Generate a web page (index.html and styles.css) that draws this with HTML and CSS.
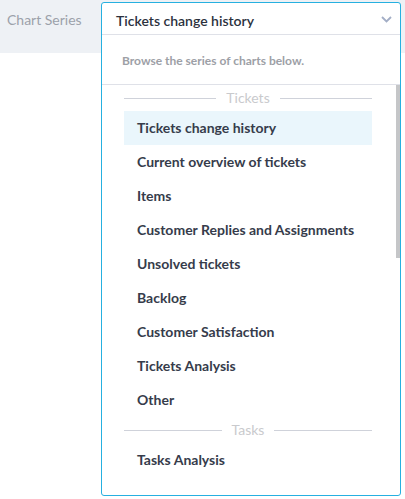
FILE: index.html
```html
<!DOCTYPE html>
<html>
<head>
<meta charset="utf-8">
<link rel="stylesheet" href="styles.css">
</head>
<body>
<div class="bar">
  <span class="label">Chart Series</span>
</div>
<div class="dropdown">
  <div class="head">
    <span class="value">Tickets change history</span>
    <svg class="chev" width="11" height="7" viewBox="0 0 11 7"><path d="M1 1 L5.5 5.5 L10 1" fill="none" stroke="#a3aec6" stroke-width="1.8"/></svg>
  </div>
  <div class="desc">Browse the series of charts below.</div>
  <div class="list">
    <div class="group"><span>Tickets</span></div>
    <div class="item active">Tickets change history</div>
    <div class="item">Current overview of tickets</div>
    <div class="item">Items</div>
    <div class="item">Customer Replies and Assignments</div>
    <div class="item">Unsolved tickets</div>
    <div class="item">Backlog</div>
    <div class="item">Customer Satisfaction</div>
    <div class="item">Tickets Analysis</div>
    <div class="item">Other</div>
    <div class="group"><span>Tasks</span></div>
    <div class="item">Tasks Analysis</div>
    <div class="scroll"></div>
  </div>
</div>
</body>
</html>
```
FILE: styles.css
```css
html, body { margin: 0; padding: 0; }
body {
  font-family: Lato, "Open Sans", sans-serif;
  background: #fff;
  width: 405px;
  height: 499px;
  overflow: hidden;
  position: relative;
}
.bar {
  height: 53px;
  background: #eef1f5;
  display: flex;
  align-items: flex-start;
}
.label {
  margin: 11px 0 0 7px;
  font-size: 14px;
  color: #9ca1aa;
}
.dropdown {
  position: absolute;
  left: 101px;
  top: 2px;
  width: 298px;
  height: 492px;
  border: 1px solid #26b0e0;
  border-radius: 3px;
  background: #fff;
}
.head {
  height: 32px;
  border-bottom: 1px solid #dfe1e8;
  display: flex;
  align-items: center;
  justify-content: space-between;
  padding: 3px 8px 0 14px;
  box-sizing: border-box;
}
.value {
  font-size: 14px;
  font-weight: 600;
  color: #2b313d;
}
.chev { margin-top: -2px; }
.desc {
  height: 50px;
  border-bottom: 1px solid #dfe1e8;
  box-sizing: border-box;
  display: flex;
  align-items: center;
  padding-left: 20px;
  padding-top: 2px;
  font-size: 12px;
  font-weight: 700;
  color: #9da0a6;
}
.list {
  position: relative;
  padding: 0 28px 0 22px;
}
.group {
  height: 26px;
  box-sizing: border-box;
  padding-bottom: 2px;
  display: flex;
  align-items: center;
  gap: 10px;
  font-size: 14px;
  color: #c9cacd;
}
.group::before, .group::after {
  content: "";
  flex: 1;
  height: 1px;
  background: #cfd2da;
  margin-top: 2px;
}
.item {
  height: 34px;
  box-sizing: border-box;
  padding: 0 0 2px 13px;
  display: flex;
  align-items: center;
  font-size: 14px;
  font-weight: 700;
  color: #363c4b;
}
.item.active { background: #eaf6fc; }
.scroll {
  position: absolute;
  right: 0;
  top: 0;
  width: 4px;
  height: 173px;
  background: #c5c6c8;
}
```
